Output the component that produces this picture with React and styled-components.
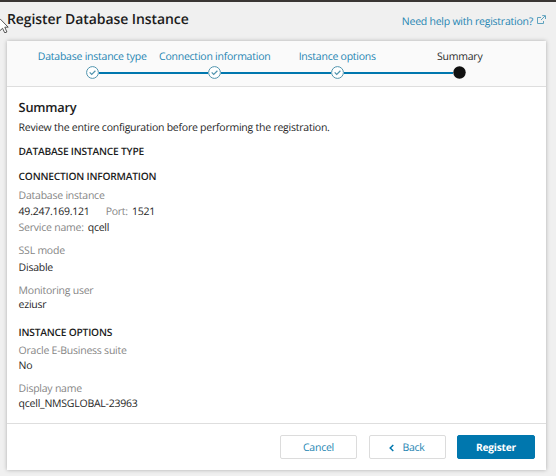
import React from "react";
import styled, { createGlobalStyle } from "styled-components";

const GlobalStyle = createGlobalStyle`
  * { box-sizing: border-box; }
  body {
    margin: 0;
    background: #f0f0f0;
    font-family: "Open Sans", "Noto Sans", sans-serif;
    font-size: 10.5px;
    letter-spacing: -0.235px;
    text-rendering: geometricPrecision;
    color: #262626;
    overflow: hidden;
  }
`;

const Page = styled.div`
  position: relative;
  display: flex;
  flex-direction: column;
  width: 556px;
  height: 476px;
  border-top: 2px solid #3a3634;
  background: #f0f0f0;
`;

const Header = styled.header`
  display: flex;
  justify-content: space-between;
  align-items: center;
  height: 36px;
  margin-bottom: 3px;
  padding: 0 10px 0 7px;
`;

const Title = styled.h1`
  margin: 0;
  font-size: 14px;
  letter-spacing: -0.08px;
  line-height: 20px;
  font-weight: 600;
  color: #1c1c1c;
  white-space: nowrap;
`;

const HelpLink = styled.a`
  display: flex;
  align-items: center;
  gap: 4px;
  padding-top: 3px;
  color: #2585b2;
  line-height: 16px;
  white-space: nowrap;

  svg {
    margin-top: -3px;
  }
`;

const Panel = styled.main`
  display: flex;
  flex-direction: column;
  width: 539px;
  height: 429px;
  margin-left: 7px;
  background: #fff;
  box-shadow: 0 0 4px rgba(0, 0, 0, 0.28);
`;

const Stepper = styled.nav`
  display: grid;
  grid-template-columns: repeat(4, 122.5px);
  height: 46px;
  padding: 8px 0 0 24px;
  background: #fafafa;
  border-bottom: 1px solid #dedede;
`;

const Step = styled.div`
  display: flex;
  flex-direction: column;
  align-items: center;
  line-height: 16px;
  white-space: nowrap;
  color: ${(p) => (p.$current ? "#2b2b2b" : "#2585b2")};
`;

const Track = styled.div`
  display: flex;
  align-items: center;
  align-self: stretch;
  height: 15px;
`;

const Segment = styled.span`
  flex: 1;
  height: 2px;
  background: ${(p) => (p.$hidden ? "transparent" : "#0077ae")};
`;

const Marker = styled.svg`
  display: block;
  flex: none;
  width: 13px;
  height: 13px;
`;

const Body = styled.section`
  flex: 1;
  padding: 10px 11.6px 0;
`;

const Heading = styled.h2`
  margin: 0;
  font-size: 12.8px;
  line-height: 20px;
  font-weight: 600;
  color: #1c1c1c;
`;

const Text = styled.p`
  margin: ${(p) => p.$top || 0}px 0 0;
  line-height: 16px;
`;

const SectionTitle = styled.h3`
  margin: ${(p) => p.$top}px 0 0;
  font-size: 10.2px;
  letter-spacing: -0.2px;
  line-height: 16px;
  font-weight: 600;
  color: #1c1c1c;
`;

const Label = styled.div`
  margin-top: ${(p) => p.$top}px;
  line-height: 16px;
  color: #858585;
`;

const Value = styled.div`
  margin-top: ${(p) => p.$top || 0}px;
  line-height: 16px;
`;

const Inline = styled.div`
  display: flex;
  gap: 16px;
  line-height: 16px;
`;

const Pair = styled.span`
  display: flex;
  gap: 4px;
  line-height: 16px;
  color: #858585;

  b {
    font-weight: 400;
    color: #262626;
  }
`;

const Footer = styled.footer`
  display: flex;
  justify-content: flex-end;
  gap: 11.5px;
  height: 47px;
  padding: 11px 11px 0 0;
  border-top: 1px solid #dedede;
`;

const Button = styled.button`
  display: flex;
  align-items: center;
  justify-content: center;
  gap: 8px;
  width: ${(p) => (p.$primary ? 78 : 77)}px;
  height: 24px;
  padding: ${(p) => (p.$primary ? "0" : "1px 0 0")};
  border: 1px solid ${(p) => (p.$primary ? "#0077ae" : "#dcdcdc")};
  border-radius: 2px;
  background: ${(p) => (p.$primary ? "#0077ae" : "#fff")};
  color: ${(p) => (p.$primary ? "#fff" : "#2585b2")};
  font-family: inherit;
  font-size: ${(p) => (p.$primary ? 10.2 : 10.5)}px;
  letter-spacing: inherit;
  text-rendering: inherit;
  font-weight: ${(p) => (p.$primary ? 700 : 400)};
`;

const Pointer = styled.svg`
  position: absolute;
  left: 0;
  top: 15px;
  width: 10px;
  height: 16px;
`;

const steps = [
  "Database instance type",
  "Connection information",
  "Instance options",
  "Summary",
];

function StepMarker({ current }) {
  return (
    <Marker viewBox="0 0 13 13">
      {current ? (
        <circle cx="6.5" cy="6.5" r="6.2" fill="#111" />
      ) : (
        <g fill="none" stroke="#4f93ad">
          <circle cx="6.5" cy="6.5" r="5.9" fill="#fff" />
          <path d="M3.7 6.4 5.7 8.4 9.4 4.8" strokeWidth="1.2" />
        </g>
      )}
    </Marker>
  );
}

export default function App() {
  return (
    <Page>
      <GlobalStyle />
      <Header>
        <Title>Register Database Instance</Title>
        <HelpLink>
          Need help with registration?
          <svg width="9" height="10" viewBox="0 0 9 10" fill="none" stroke="#5fa3bf">
            <path d="M4 2.5H.5v6h6V6" />
            <path d="M4 5 8 1M5.2.6h3.3V4" />
          </svg>
        </HelpLink>
      </Header>
      <Panel>
        <Stepper>
          {steps.map((name, i) => {
            const last = i === steps.length - 1;
            return (
              <Step key={name} $current={last}>
                {name}
                <Track>
                  <Segment $hidden={i === 0} />
                  <StepMarker current={last} />
                  <Segment $hidden={last} />
                </Track>
              </Step>
            );
          })}
        </Stepper>
        <Body>
          <Heading>Summary</Heading>
          <Text $top={3}>
            Review the entire configuration before performing the registration.
          </Text>
          <SectionTitle $top={7}>DATABASE INSTANCE TYPE</SectionTitle>
          <SectionTitle $top={9}>CONNECTION INFORMATION</SectionTitle>
          <Label $top={4}>Database instance</Label>
          <Inline>
            <span>49.247.169.121</span>
            <Pair>
              Port: <b>1521</b>
            </Pair>
          </Inline>
          <Pair>
            Service name: <b>qcell</b>
          </Pair>
          <Label $top={7}>SSL mode</Label>
          <Value $top={1}>Disable</Value>
          <Label $top={7}>Monitoring user</Label>
          <Value $top={-2}>eziusr</Value>
          <SectionTitle $top={11}>INSTANCE OPTIONS</SectionTitle>
          <Label $top={3}>Oracle E-Business suite</Label>
          <Value $top={-1}>No</Value>
          <Label $top={7}>Display name</Label>
          <Value $top={-1}>qcell_NMSGLOBAL-23963</Value>
        </Body>
        <Footer>
          <Button>Cancel</Button>
          <Button>
            <svg width="5" height="8" viewBox="0 0 5 8" fill="none" stroke="#0077ae" strokeWidth="1.5">
              <path d="M4.3 1 1.2 4l3.1 3" />
            </svg>
            Back
          </Button>
          <Button $primary>Register</Button>
        </Footer>
      </Panel>
      <Pointer viewBox="0 0 10 16">
        <path
          d="M0 1.8 8.2 10.2H4.8L6.9 15 4.7 15.8 2.6 11.3 0 13.6"
          fill="#fff"
          stroke="#444"
          strokeWidth=".9"
        />
      </Pointer>
    </Page>
  );
}
